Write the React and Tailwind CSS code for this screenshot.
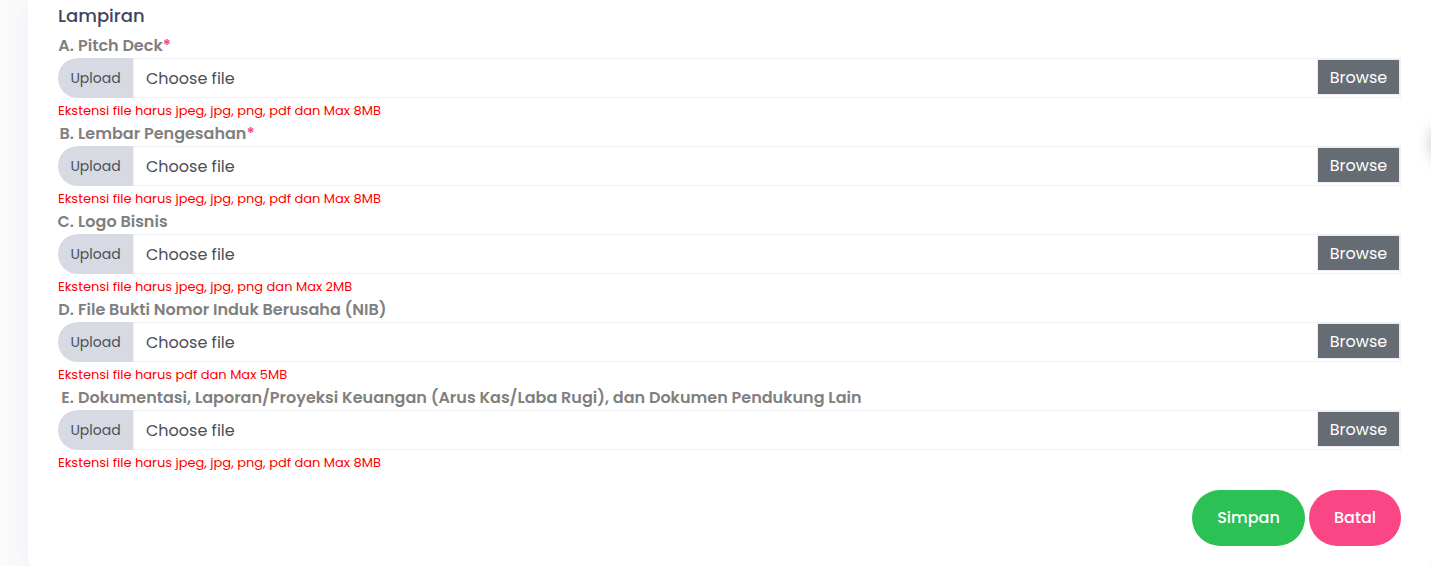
import { useRef } from "react";

const attachments = [
  { id: "pitch-deck", title: "Pitch Deck", required: true, hint: "Ekstensi file harus jpeg, jpg, png, pdf dan Max 8MB" },
  { id: "lembar-pengesahan", title: "Lembar Pengesahan", required: true, hint: "Ekstensi file harus jpeg, jpg, png, pdf dan Max 8MB" },
  { id: "logo-bisnis", title: "Logo Bisnis", hint: "Ekstensi file harus jpeg, jpg, png dan Max 2MB" },
  { id: "nib", title: "File Bukti Nomor Induk Berusaha (NIB)", hint: "Ekstensi file harus pdf dan Max 5MB" },
  {
    id: "dokumentasi",
    title: "Dokumentasi, Laporan/Proyeksi Keuangan (Arus Kas/Laba Rugi), dan Dokumen Pendukung Lain",
    hint: "Ekstensi file harus jpeg, jpg, png, pdf dan Max 8MB",
  },
];

function FileField({ letter, id, title, required, hint }) {
  const input = useRef(null);
  return (
    <li>
      <label htmlFor={id} className="flex gap-1 text-base font-semibold text-[#808080]">
        <span className="flex w-4 shrink-0 justify-end whitespace-nowrap">{letter}.</span>
        <span>
          {title}
          {required && <span className="text-[#fb4685]">*</span>}
        </span>
      </label>
      <div className="relative flex h-10">
        <input ref={input} id={id} type="file" required={required} tabIndex={-1} className="sr-only" />
        <span className="flex w-[75px] shrink-0 items-center justify-center rounded-l-full bg-[#d7dae3] text-sm text-[#495057]">
          Upload
        </span>
        <div className="flex min-w-0 flex-1 items-start justify-between border border-[#f0f1f5]">
          <label htmlFor={id} className="flex-1 self-center pt-0.5 pl-3 text-base text-[#495057]">
            Choose file
          </label>
          <button
            type="button"
            onClick={() => input.current.click()}
            className="h-9 w-[83px] border border-[#ebedf2] bg-[#656c73] pt-0.5 text-base leading-8 text-white"
          >
            Browse
          </button>
        </div>
      </div>
      <p className="pt-1 pb-0.5 text-[13px] leading-[18px] text-[#ff0000]">{hint}</p>
    </li>
  );
}

export default function App() {
  return (
    <div className="relative h-screen overflow-x-hidden overflow-y-auto bg-[#fafafa] pl-7 font-['Poppins','Inter',sans-serif] [scrollbar-width:none]">
      <main className="rounded-b-[20px] bg-white px-[30px] pt-1 pb-[30px] shadow-[0_0_30px_#eff1fb]">
        <form>
          <h2 className="mb-1.5 text-lg leading-6 font-medium text-[#3d4465]">Lampiran</h2>
          <ol>
            {attachments.map((item, i) => (
              <FileField key={item.id} letter={"ABCDE"[i]} {...item} />
            ))}
          </ol>
          <div className="mt-4 flex justify-end gap-1">
            <button type="submit" className="h-14 w-[113px] rounded-full bg-[#2bc155] text-base font-medium text-white">
              Simpan
            </button>
            <button type="button" className="h-14 w-[92px] rounded-full bg-[#fb4685] text-base font-medium text-white">
              Batal
            </button>
          </div>
        </form>
      </main>
      <div aria-hidden="true" className="absolute top-[124px] -right-10 size-10 rounded-full bg-white shadow-[0_0_16px_rgba(0,0,0,0.25)]" />
    </div>
  );
}
